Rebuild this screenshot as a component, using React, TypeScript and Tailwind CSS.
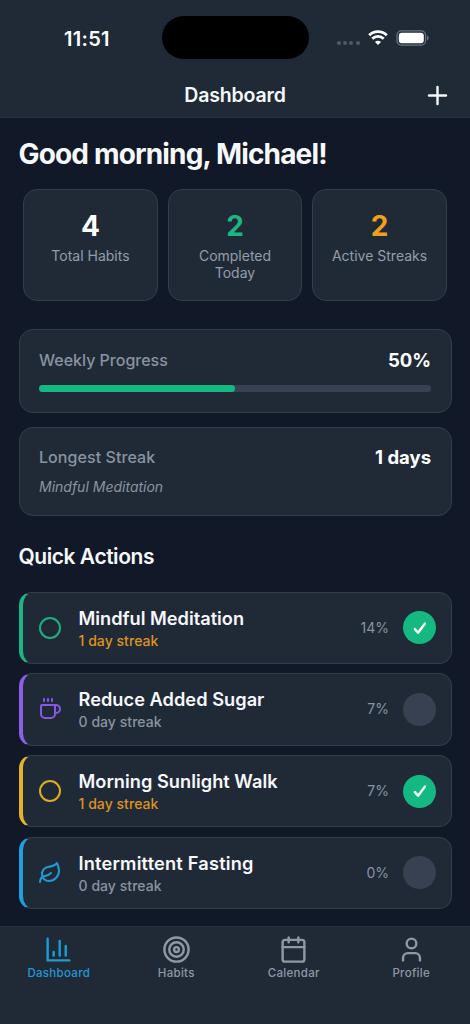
import { Calendar, Circle, Coffee, Leaf, Plus, Target, User } from 'lucide-react';

const stats = [
  { value: 4, label: 'Total Habits', color: 'text-white' },
  { value: 2, label: 'Completed Today', color: 'text-[#1db682]' },
  { value: 2, label: 'Active Streaks', color: 'text-[#f0a01c]' },
];

const habits = [
  { name: 'Mindful Meditation', tracking: 'tracking-[0px]', streak: 1, percent: 14, done: true, icon: Circle, border: 'border-l-[#1db682]', color: 'text-[#1fae80]' },
  { name: 'Reduce Added Sugar', tracking: 'tracking-[0.04px]', streak: 0, percent: 7, done: false, icon: Coffee, border: 'border-l-[#8b5fe8]', color: 'text-[#8459e4]' },
  { name: 'Morning Sunlight Walk', tracking: 'tracking-[0.03px]', streak: 1, percent: 7, done: true, icon: Circle, border: 'border-l-[#e3b42a]', color: 'text-[#dcac22]' },
  { name: 'Intermittent Fasting', tracking: 'tracking-[0.2px]', streak: 0, percent: 0, done: false, icon: Leaf, border: 'border-l-[#1ea1dc]', color: 'text-[#1f9bd4]' },
];

function ChartIcon({ size = 24 }: { size?: number }) {
  return (
    <svg width={size} height={size} viewBox="0 0 24 24" fill="none" stroke="currentColor" strokeWidth="2" strokeLinecap="round" strokeLinejoin="round">
      <path d="M3 3v18h18" />
      <path d="M18 17V9" />
      <path d="M13 17V5" />
      <path d="M8 17v-3" />
    </svg>
  );
}

const tabs = [
  { icon: ChartIcon, label: 'Dashboard', active: true },
  { icon: Target, label: 'Habits', active: false },
  { icon: Calendar, label: 'Calendar', active: false },
  { icon: User, label: 'Profile', active: false },
];

function StatusBar() {
  return (
    <div className="h-[75px] flex items-center pl-16">
      <span className="w-[97.5px] pt-0.5 text-[20px] leading-6 font-semibold tracking-[0.3px] text-white">11:51</span>
      <div className="w-[147px] h-[43px] rounded-full bg-black" />
      <div className="ml-7 flex items-center">
        <div className="flex gap-[2.4px] mt-[11px]">
          {[0, 1, 2, 3].map((dot) => (
            <span key={dot} className="size-1 rounded-full bg-[#505966]" />
          ))}
        </div>
        <svg className="ml-2" width="20" height="15" viewBox="0 0 20 15" fill="none" stroke="#fff" strokeWidth="2.8">
          <path d="M1.2 5.2a12.6 12.6 0 0 1 17.6 0" />
          <path d="M4.3 8.7a8.1 8.1 0 0 1 11.4 0" />
          <path d="M10 15l-3-3.1a4.2 4.2 0 0 1 6 0z" fill="#fff" stroke="none" />
        </svg>
        {/* Battery */}
        <svg className="ml-2" width="33" height="16" viewBox="0 0 33 16">
          <rect x="1" y="0.9" width="28.6" height="14.2" rx="4.4" fill="none" stroke="#6b7380" strokeWidth="1.2" />
          <rect x="2.8" y="2.7" width="25" height="10.6" rx="3" fill="#fff" />
          <path d="M31 5.6v4.8c1.2-.5 1.6-1.3 1.6-2.4s-.4-1.9-1.6-2.4z" fill="#6b7380" />
        </svg>
      </div>
    </div>
  );
}

function Header() {
  return (
    <header className="h-[118px] shrink-0 bg-[#202a37] border-b border-[#28323f]">
      <StatusBar />
      <div className="h-10 grid grid-cols-[1fr_auto_1fr] items-center pr-[18px]">
        <span />
        <h1 className="pl-[18px] text-[19.5px] leading-6 font-semibold tracking-[-0.15px]">Dashboard</h1>
        <button className="justify-self-end">
          <Plus size={29} strokeWidth={2} />
        </button>
      </div>
    </header>
  );
}

function HabitRow({ habit }: { habit: (typeof habits)[number] }) {
  return (
    <div className={`h-[72.6px] flex items-center rounded-[13px] border border-[#333d4b] border-l-[4.8px] bg-[#202a37] pl-[15.5px] pr-[14.5px] ${habit.border}`}>
      <habit.icon size={24} strokeWidth={2} className={habit.color} />
      <div className="ml-[16.5px] mt-[2px] flex-1">
        <div className={`text-[18.2px] leading-[23px] font-semibold ${habit.tracking}`}>{habit.name}</div>
        <div className={`text-[14px] leading-[21px] font-medium tracking-[0.05px] ${habit.streak > 0 ? 'text-[#de9221]' : 'text-[#8b93a0]'}`}>
          {habit.streak} day streak
        </div>
      </div>
      <span className="mr-[14px] text-[14px] leading-5 text-[#8b93a0]">{habit.percent}%</span>
      <button className={`size-[33px] rounded-full flex items-center justify-center ${habit.done ? 'bg-[#13b981]' : 'bg-[#374151]'}`}>
        {habit.done && (
          <svg width="14" height="14" viewBox="0 0 14 14" fill="none" stroke="#fff" strokeWidth="2.4" strokeLinecap="round" strokeLinejoin="round">
            <path d="M1.9 8.1l3.2 3.6 6.8-9.1" />
          </svg>
        )}
      </button>
    </div>
  );
}

export default function App() {
  return (
    <div className="w-full h-[1024px] flex flex-col overflow-hidden bg-[#111827] text-[#f6f8fa] font-['Inter',sans-serif]">
      <Header />

      <main className="flex-1 px-[18.5px] pt-[18px]">
        <h2 className="text-[28px] leading-9 font-bold tracking-[-0.84px]">Good morning, Michael!</h2>

        <div className="mt-[17px] px-[4.5px] flex gap-[9.6px]">
          {stats.map((stat) => (
            <div key={stat.label} className="flex-1 h-28 rounded-[14px] border border-[#333d4b] bg-[#202a37] px-[19px] pt-[19px] text-center">
              <div className={`text-[28px] leading-[34px] font-bold ${stat.color}`}>{stat.value}</div>
              <div className="mt-[5px] -mx-1 text-[14px] leading-[16.7px] text-[#949caa]">{stat.label}</div>
            </div>
          ))}
        </div>

        <div className="mt-7 h-[83.5px] rounded-[14px] border border-[#333d4b] bg-[#202a37] px-[19.5px] pt-[18px]">
          <div className="flex items-center justify-between">
            <span className="text-[16px] leading-6 font-medium text-[#8b93a0]">Weekly Progress</span>
            <span className="text-[18.5px] leading-6 font-bold text-white">50%</span>
          </div>
          <div className="mt-[13px] h-[7px] rounded-full bg-[#374151]">
            <div className="h-full w-1/2 rounded-full bg-[#13b981]" />
          </div>
        </div>

        <div className="mt-[14px] h-[89px] rounded-[14px] border border-[#333d4b] bg-[#202a37] px-[19.5px] pt-[17px]">
          <div className="flex items-center justify-between">
            <span className="text-[16px] leading-6 font-medium tracking-[0.07px] text-[#8b93a0]">Longest Streak</span>
            <span className="text-[18.5px] leading-6 font-bold text-white">1 days</span>
          </div>
          <div className="mt-[8px] text-[14px] leading-5 italic text-[#8b93a0]">Mindful Meditation</div>
        </div>

        <h3 className="mt-[27px] text-[21px] leading-7 font-semibold tracking-[-0.45px]">Quick Actions</h3>

        <div className="mt-[21px] flex flex-col gap-[9.1px]">
          {habits.map((habit) => (
            <HabitRow key={habit.name} habit={habit} />
          ))}
        </div>
      </main>

      <nav className="h-[98.5px] shrink-0 grid grid-cols-4 bg-[#202a37] border-t border-[#26303d]">
        {tabs.map((tab) => (
          <button key={tab.label} className={`flex flex-col items-center pt-[8px] ${tab.active ? 'text-[#1f9bd4]' : 'text-[#9098a6]'}`}>
            <tab.icon size={29} />
            <span className="mt-px text-[11.5px] leading-4 font-medium tracking-[0.3px]">{tab.label}</span>
          </button>
        ))}
      </nav>
    </div>
  );
}
